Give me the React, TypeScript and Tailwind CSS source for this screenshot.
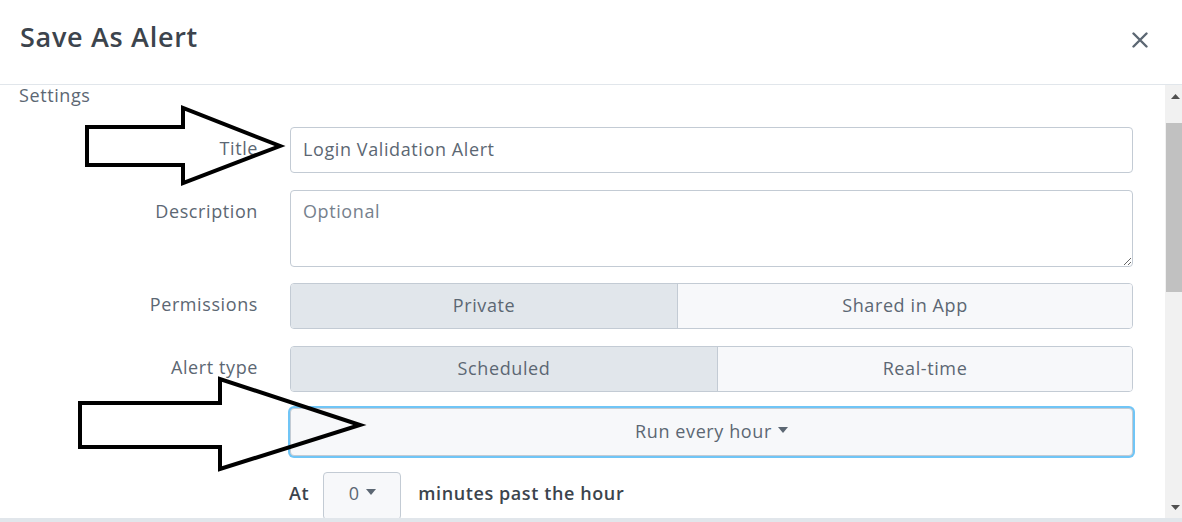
import React from "react";

const font = { fontFamily: "'Open Sans', Lato, 'Liberation Sans', sans-serif" };

function Label({ children }: { children: React.ReactNode }) {
  return (
    <div className="w-[238px] shrink-0 pt-[10px] text-right text-[18px] leading-[22px] tracking-[0.6px] text-[#5c6773]">
      {children}
    </div>
  );
}

function Caret() {
  return (
    <svg width="10" height="6" viewBox="0 0 10 6" className="inline-block ml-[6px] mb-[2px]">
      <polygon points="0,0 10,0 5,6" fill="#5c6773" />
    </svg>
  );
}

export default function App() {
  return (
    <div className="relative w-[1182px] h-[522px] bg-white flex flex-col overflow-hidden tracking-[0.6px]" style={font}>
      {/* Header */}
      <div className="h-[85px] shrink-0 border-b border-[#e1e6eb] flex items-start justify-between pl-[20px] pr-[34px]">
        <div className="pt-[20px] text-[27px] leading-[34px] font-semibold text-[#3c444d] tracking-[0.7px]">Save As Alert</div>
        <div className="pt-[32px]">
          <svg width="16" height="16" viewBox="0 0 16 16">
            <path d="M1.5 1.5 L14.5 14.5 M14.5 1.5 L1.5 14.5" stroke="#5c6773" strokeWidth="2.4" strokeLinecap="round" />
          </svg>
        </div>
      </div>

      {/* Body */}
      <div className="flex-1 flex min-h-0">
        <div className="flex-1 flex flex-col min-h-0 pl-[20px]">
          <div className="-ml-[1px] text-[18px] leading-[20px] text-[#5c6773]">Settings</div>

          <div className="flex items-start mt-[22px]">
            <Label>Title</Label>
            <input
              readOnly
              defaultValue="Login Validation Alert"
              className="ml-[32px] w-[843px] h-[46px] border border-[#c3cbd4] rounded-[4px] px-[12px] pb-[2px] text-[18px] tracking-[0.6px] text-[#5c6773] bg-white outline-none"
              style={font}
            />
          </div>

          <div className="flex items-start mt-[17px]">
            <Label>Description</Label>
            <textarea
              placeholder="Optional"
              className="ml-[32px] w-[843px] h-[77px] border border-[#c3cbd4] rounded-[4px] px-[12px] pt-[8px] text-[18px] leading-[24px] tracking-[0.6px] text-[#3c444d] placeholder:text-[#76818d] bg-white outline-none"
              style={font}
            />
          </div>

          <div className="flex items-start mt-[16px]">
            <Label>Permissions</Label>
            <div className="ml-[32px] w-[843px] h-[46px] flex border border-[#c3cbd4] rounded-[4px] overflow-hidden text-[18px] text-[#5c6773]">
              <div className="w-[387px] bg-[#e1e6eb] border-r border-[#c3cbd4] flex items-center justify-center pb-[2px]">Private</div>
              <div className="flex-1 bg-[#f7f8fa] flex items-center justify-center pb-[2px]">Shared in App</div>
            </div>
          </div>

          <div className="flex items-start mt-[17px]">
            <Label>Alert type</Label>
            <div className="ml-[32px] w-[843px] h-[46px] flex border border-[#c3cbd4] rounded-[4px] overflow-hidden text-[18px] text-[#5c6773]">
              <div className="w-[427px] bg-[#e1e6eb] border-r border-[#c3cbd4] flex items-center justify-center pb-[2px]">Scheduled</div>
              <div className="flex-1 bg-[#f7f8fa] flex items-center justify-center pb-[2px]">Real-time</div>
            </div>
          </div>

          <div className="flex items-start mt-[16px]">
            <div className="w-[238px] shrink-0" />
            <div className="ml-[32px] w-[843px] h-[48px] border border-[#c3cbd4] rounded-[4px] ring-2 ring-[#70c5f6] bg-[#f7f8fa] flex items-center justify-center pb-[2px] text-[18px] text-[#5c6773]">
              Run every hour
              <Caret />
            </div>
          </div>

          <div className="flex-1 min-h-0 overflow-hidden">
            <div className="flex items-start mt-[16px] pl-[269px] text-[18px] leading-[22px] text-[#3c444d]">
              <span className="pt-[10px] font-semibold">At</span>
              <div className="ml-[14px] w-[78px] h-[48px] shrink-0 border border-[#c3cbd4] rounded-[4px] bg-[#f7f8fa] flex items-center justify-center pb-[6px] text-[#5c6773]">
                0
                <Caret />
              </div>
              <span className="pt-[10px] ml-[17px] font-semibold">minutes past the hour</span>
            </div>
          </div>
        </div>

        {/* Scrollbar */}
        <div className="w-[17px] shrink-0 bg-[#f1f1f1] flex flex-col">
          <div className="h-[17px] flex items-center justify-center pl-[4px] pt-[6px]">
            <svg width="9" height="5" viewBox="0 0 9 5">
              <polygon points="0,5 9,5 4.5,0" fill="#505050" />
            </svg>
          </div>
          <div className="flex-1 flex flex-col">
            <div className="mt-[21px] h-[169px] ml-[1px] bg-[#c1c1c1]" />
          </div>
          <div className="h-[17px] flex items-center justify-center pl-[4px] pb-[4px]">
            <svg width="9" height="5" viewBox="0 0 9 5">
              <polygon points="0,0 9,0 4.5,5" fill="#505050" />
            </svg>
          </div>
        </div>
      </div>

      {/* Footer edge */}
      <div className="h-[4px] shrink-0 bg-[#e1e6eb]" />

      {/* Annotation arrows */}
      <svg className="absolute inset-0 pointer-events-none" width="1182" height="522" viewBox="0 0 1182 522">
        <polygon
          points="87,127 183,127 183,108 280,146 183,183 183,165 87,165"
          fill="none"
          stroke="#000"
          strokeWidth="4"
          strokeLinejoin="miter"
        />
        <polygon
          points="80,403 220,403 220,379 360,425 220,469 220,447 80,447"
          fill="none"
          stroke="#000"
          strokeWidth="4"
          strokeLinejoin="miter"
        />
      </svg>
    </div>
  );
}
